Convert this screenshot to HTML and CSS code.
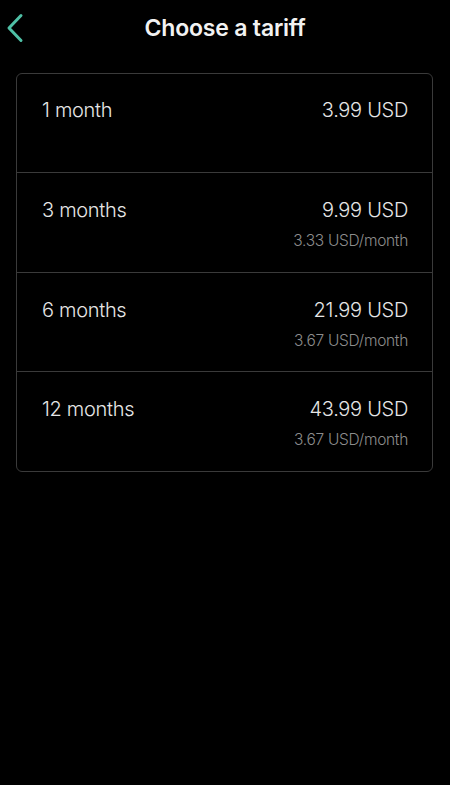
FILE: index.html
```html
<!DOCTYPE html>
<html lang="en">
<head>
    <meta charset="UTF-8">
    <meta name="viewport" content="width=device-width, initial-scale=1.0">
    <title>Choose a tariff</title>
    <link rel="stylesheet" href="styles.css">
</head>
<body>
    <div id="header">
        <button id="back-btn" aria-label="Back">
            <svg width="18" height="30" viewBox="0 0 18 30">
                <path d="M15 2.5 L3 15 L15 27.5" fill="none" stroke="#4fc0a6" stroke-width="3" stroke-linecap="round" stroke-linejoin="round"/>
            </svg>
        </button>
        <h1>Choose a tariff</h1>
    </div>
    <div id="tariffs">
        <div class="tariff">
            <span class="period">1 month</span>
            <div class="price-box">
                <div class="price">3.99 USD</div>
            </div>
        </div>
        <div class="tariff">
            <span class="period">3 months</span>
            <div class="price-box">
                <div class="price">9.99 USD</div>
                <div class="per-month">3.33 USD/month</div>
            </div>
        </div>
        <div class="tariff">
            <span class="period">6 months</span>
            <div class="price-box">
                <div class="price">21.99 USD</div>
                <div class="per-month">3.67 USD/month</div>
            </div>
        </div>
        <div class="tariff">
            <span class="period">12 months</span>
            <div class="price-box">
                <div class="price">43.99 USD</div>
                <div class="per-month">3.67 USD/month</div>
            </div>
        </div>
    </div>
</body>
</html>
```

FILE: styles.css
```css
body {
    margin: 0;
    padding: 0 16px;
    background-color: #000;
    color: #e6e6e6;
    font-family: Inter, Roboto, sans-serif;
}

#header {
    position: relative;
    height: 56px;
    display: flex;
    align-items: center;
    justify-content: center;
}

#back-btn {
    position: absolute;
    left: -10px;
    top: 13px;
    background: none;
    border: none;
    padding: 0;
    cursor: pointer;
}

h1 {
    margin: 0;
    font-size: 23px;
    font-weight: 600;
    color: #f2f2f2;
    letter-spacing: -0.2px;
}

#tariffs {
    margin-top: 17px;
    width: 417px;
    box-sizing: border-box;
    border: 1px solid #3a3a3a;
    border-radius: 6px;
}

.tariff {
    display: flex;
    justify-content: space-between;
    align-items: flex-start;
    height: 98px;
    box-sizing: border-box;
    padding: 24px 24px 0 25px;
    cursor: pointer;
}

.tariff + .tariff {
    border-top: 1px solid #3a3a3a;
    height: 99.5px;
    padding-top: 25px;
}

.period, .price {
    font-size: 20px;
    line-height: 24px;
    font-weight: 300;
    letter-spacing: -0.3px;
}

.price-box {
    text-align: right;
}

.per-month {
    margin-top: 10px;
    font-size: 15.5px;
    line-height: 18px;
    font-weight: 300;
    color: #8c8c8c;
    letter-spacing: -0.3px;
}
```
